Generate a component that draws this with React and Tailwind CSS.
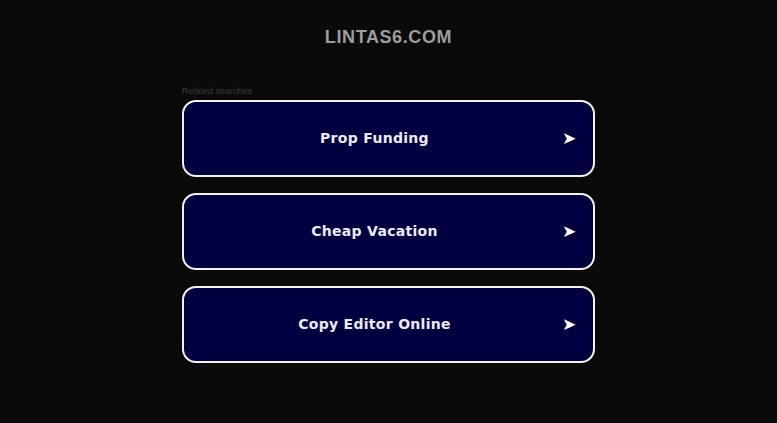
const links = ["Prop Funding", "Cheap Vacation", "Copy Editor Online"]

function LinkBox({ label }) {
  return (
    <a
      href="#"
      className="flex items-center h-[77px] rounded-[14px] border-2 border-[#f2f2f2] bg-[#000040] text-[#ebebf5] no-underline"
    >
      <span className="flex-1 pl-[3px] text-center text-[14px] font-bold tracking-[0.3px] [font-family:'DejaVu_Sans',sans-serif]">
        {label}
      </span>
      <span className="w-[31px] text-[17px] leading-none text-white text-left [font-family:'DejaVu_Sans',sans-serif]">➤</span>
    </a>
  )
}

export default function App() {
  return (
    <div className="min-h-[423px] w-full bg-[#0a0a0a] flex flex-col items-center [font-family:'Liberation_Sans',Arial,sans-serif]">
      <h1 className="mt-[25px] text-[18px] leading-[24px] font-bold tracking-[0.6px] text-[#9d9d9d]">LINTAS6.COM</h1>
      <div className="mt-[36px] w-[413px]">
        <p className="text-[9px] leading-[12px] text-[#3a3a3a] mb-[3px]">Related searches</p>
        <div className="flex flex-col gap-[16px]">
          {links.map((l) => (
            <LinkBox key={l} label={l} />
          ))}
        </div>
      </div>
    </div>
  )
}
